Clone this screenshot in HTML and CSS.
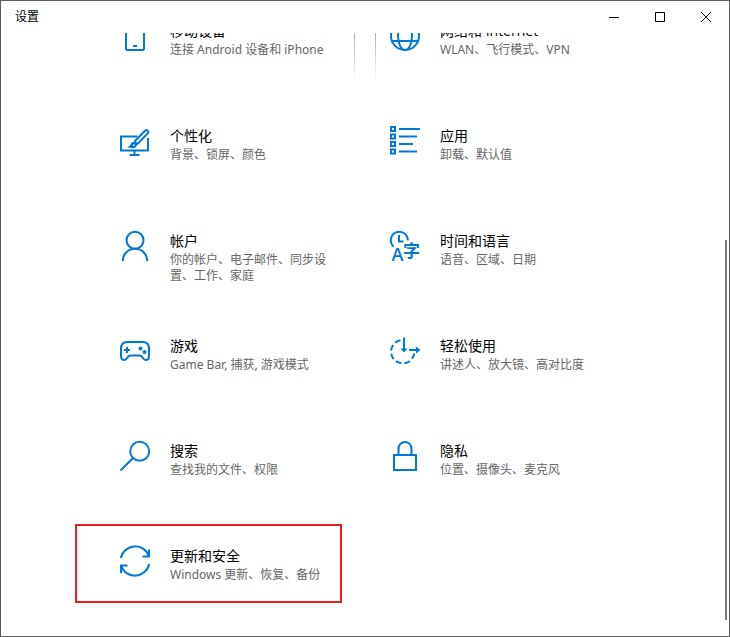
FILE: index.html
```html
<!DOCTYPE html>
<html lang="zh-CN">
<head>
<meta charset="utf-8">
<title>设置</title>
<link rel="stylesheet" href="styles.css">
</head>
<body>
<div class="window">
  <header class="titlebar">
    <h1 class="caption">设置</h1>
    <div class="controls">
      <button class="control" type="button" aria-label="最小化"><svg viewBox="0 0 10 10"><path d="M0 5.5h10"/></svg></button>
      <button class="control" type="button" aria-label="最大化"><svg viewBox="0 0 10 10"><path d="M.5 .5h9v9h-9z"/></svg></button>
      <button class="control" type="button" aria-label="关闭"><svg viewBox="0 0 10 10"><path d="M0 0l10 10M10 0L0 10"/></svg></button>
    </div>
  </header>
  <main class="content">
    <nav class="grid">
      <a class="tile glow-right" href="#mobile">
        <svg class="icon" viewBox="0 0 30 30"><path d="M7.500 1h15q1.500 0 1.500 1.500v25q0 1.500-1.500 1.500h-15q-1.500 0-1.500-1.500v-25q0-1.500 1.500-1.500zM13 25h4"/></svg>
        <span class="text"><span class="name">移动设备</span><span class="desc">连接 Android 设备和 iPhone</span></span>
      </a>
      <a class="tile glow-left" href="#network">
        <svg class="icon" viewBox="0 0 30 30"><circle cx="15" cy="15" r="14"/><ellipse cx="15" cy="15" rx="7" ry="14"/><path d="M2 10h26M2 20h26"/></svg>
        <span class="text"><span class="name">网络和 Internet</span><span class="desc">WLAN、飞行模式、VPN</span></span>
      </a>
      <a class="tile" href="#personalization">
        <svg class="icon" viewBox="0 0 30 30"><path d="M17.500 10.500H1v14h27V12M14.500 24.500v4M9.500 29h10"/><path d="M14.500 15.500L25 4.700q1.500-1.200 2.700 0t0 2.700L17.200 18.200M14.500 15.500l2.700 2.700"/><path class="fill" d="M7 20.800q3 0 3.500-2.500 1-3 4-2.500 3 1 2.500 3.500-1 3-4.500 3-3.500-.2-5.500-1.500z"/><path class="dot" d="M13 18.500h1.500v1.500H13z"/></svg>
        <span class="text"><span class="name">个性化</span><span class="desc">背景、锁屏、颜色</span></span>
      </a>
      <a class="tile" href="#apps">
        <svg class="icon" viewBox="0 0 30 30"><path d="M1 1h4v4H1zM1 8.500h4v4H1zM1 16h4v4H1zM1 23.500h4v4H1zM9 3h21M9 10.500h18M9 18h14M9 25.500h18"/></svg>
        <span class="text"><span class="name">应用</span><span class="desc">卸载、默认值</span></span>
      </a>
      <a class="tile" href="#accounts">
        <svg class="icon" viewBox="0 0 30 30"><circle cx="15" cy="9.300" r="8.500"/><path d="M2.700 30a12.300 12.300 0 0 1 24.600 0"/></svg>
        <span class="text"><span class="name">帐户</span><span class="desc">你的帐户、电子邮件、同步设置、工作、家庭</span></span>
      </a>
      <a class="tile" href="#time">
        <svg class="icon" viewBox="0 0 30 30"><path d="M3.500 15.500A8.500 8.500 0 1 1 17.800 9.500M9 4v6.500h4.500"/><text class="glyph latin" x="1.500" y="30">A</text><text class="glyph" x="13" y="26">字</text></svg>
        <span class="text"><span class="name">时间和语言</span><span class="desc">语音、区域、日期</span></span>
      </a>
      <a class="tile" href="#gaming">
        <svg class="icon" viewBox="0 0 30 30"><path d="M7 6h16c4 0 6 3 6 7v7c0 2.500-1.500 4-3.500 4-2.500 0-3-4.500-5.500-4.500H10c-2.500 0-3 4.500-5.500 4.500C2.500 24 1 22.500 1 20v-7c0-4 2-7 6-7zM4 14h6M7 11v6"/><circle class="fill" cx="20.500" cy="12.500" r="2"/><circle class="fill" cx="24.500" cy="16" r="2"/></svg>
        <span class="text"><span class="name">游戏</span><span class="desc">Game Bar, 捕获, 游戏模式</span></span>
      </a>
      <a class="tile" href="#ease">
        <svg class="icon" viewBox="0 0 30 30"><path class="dashed" d="M10.500 4.200A11.700 11.700 0 1 0 24.300 17.500"/><path d="M14 1.500v13M19 14h9"/><path class="fill" d="M10.500 12.500h7L14 16.500zM26 10.500v7l4.500-3.500z"/></svg>
        <span class="text"><span class="name">轻松使用</span><span class="desc">讲述人、放大镜、高对比度</span></span>
      </a>
      <a class="tile" href="#search">
        <svg class="icon" viewBox="0 0 30 30"><circle cx="19.700" cy="10.300" r="9.500"/><path d="M13 17L.5 29.500"/></svg>
        <span class="text"><span class="name">搜索</span><span class="desc">查找我的文件、权限</span></span>
      </a>
      <a class="tile" href="#privacy">
        <svg class="icon" viewBox="0 0 30 30"><path d="M4 14h22v15H4zM8.500 14V7.500a6.500 6.500 0 0 1 13 0V14"/></svg>
        <span class="text"><span class="name">隐私</span><span class="desc">位置、摄像头、麦克风</span></span>
      </a>
      <a class="tile marked" href="#update">
        <svg class="icon" viewBox="0 0 30 30"><path d="M.8 12A14.600 14.600 0 0 1 29 10.500M22.500 10.500H29V3.500M29.200 18A14.600 14.600 0 0 1 1 19.500M7.500 19.500H1V27"/></svg>
        <span class="text"><span class="name">更新和安全</span><span class="desc">Windows 更新、恢复、备份</span></span>
      </a>
    </nav>
    <div class="scroll-thumb"></div>
  </main>
</div>
</body>
</html>
```
FILE: styles.css
```css
* {
  box-sizing: border-box;
}

body {
  margin: 0;
  font-family: "Noto Sans", "Noto Sans CJK SC", sans-serif;
  font-size: 12px;
  color: #000;
  background: #fff;
}

.window {
  display: flex;
  flex-direction: column;
  height: 100vh;
  border: 1px solid #5c5c5c;
}

.titlebar {
  display: flex;
  flex: none;
  align-items: center;
  justify-content: space-between;
  height: 32px;
  padding-left: 14px;
}

.caption {
  margin: 0;
  font-size: 12px;
  font-weight: 400;
  line-height: 18px;
}

.controls {
  display: flex;
  height: 100%;
}

.control {
  display: flex;
  align-items: center;
  justify-content: center;
  width: 46px;
  padding: 0;
  border: 0;
  background: none;
}

.control svg {
  width: 10px;
  height: 10px;
  overflow: visible;
  fill: none;
  stroke: #000;
}

/* The list is scrolled to its end, so its first row runs under the title bar. */
.content {
  position: relative;
  display: flex;
  flex: 1;
  flex-direction: column;
  align-items: center;
  justify-content: flex-end;
  min-height: 0;
  padding-bottom: 30px;
  overflow: hidden;
}

.grid {
  display: grid;
  flex: none;
  grid-template-columns: repeat(2, 250px);
  grid-auto-rows: 85px;
  gap: 20px;
}

.tile {
  position: relative;
  display: flex;
  gap: 20px;
  padding: 25px 20px 0 15px;
  color: inherit;
  text-decoration: none;
}

.icon {
  flex: none;
  width: 30px;
  height: 30px;
  overflow: visible;
  fill: none;
  stroke: #0078d7;
  stroke-width: 2;
}

.icon .fill {
  fill: #0078d7;
  stroke: none;
}

.icon .dot {
  fill: #fff;
  stroke: none;
}

.icon .dashed {
  stroke-dasharray: 6 3;
}

.glyph {
  fill: #0078d7;
  stroke: none;
  font-family: "Noto Sans CJK SC", sans-serif;
  font-size: 17px;
  font-weight: 700;
}

.latin {
  font-family: "Open Sans", sans-serif;
  font-size: 18px;
  font-weight: 600;
}

.text {
  display: flex;
  flex: 1;
  flex-direction: column;
  gap: 1px;
}

.name {
  font-family: "Open Sans", "Noto Sans CJK SC", sans-serif;
  font-size: 14px;
  line-height: 20px;
}

.desc {
  line-height: 16px;
  color: #666;
}

.glow-right::after,
.glow-left::after {
  content: "";
  position: absolute;
  top: 0;
  bottom: 0;
  width: 1px;
  background: linear-gradient(#aaa 40%, #fff);
}

.glow-right::after {
  right: 0;
}

.glow-left::after {
  left: 0;
}

.marked::after {
  content: "";
  position: absolute;
  inset: 3px 13px 3px -30px;
  border: 2px solid #ed1c24;
}

.scroll-thumb {
  position: absolute;
  top: 207px;
  right: 2px;
  bottom: 16px;
  width: 2px;
  background: #7a7a7a;
}
```
